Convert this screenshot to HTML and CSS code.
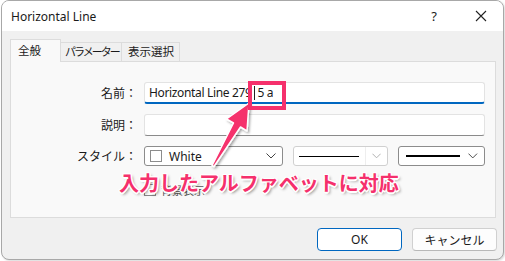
FILE: index.html
```html
<!DOCTYPE html>
<html lang="ja">
<head>
    <meta charset="UTF-8">
    <title>Horizontal Line</title>
    <link rel="stylesheet" href="styles.css">
</head>
<body>

    <div class="window">
        <div class="titlebar">
            <span class="title">Horizontal Line</span>
            <span class="help">?</span>
            <svg class="close" width="12" height="12" viewBox="0 0 12 12">
                <path d="M1 1 L11 11 M11 1 L1 11" stroke="#222" stroke-width="1.1" fill="none"/>
            </svg>
        </div>

        <div class="tabs">
            <div class="tab active">全般</div>
            <div class="tab kana">パラメーター</div>
            <div class="tab">表示選択</div>
        </div>

        <div class="panel">
            <div class="form">
                <label>名前：</label>
                <div class="input focused">Horizontal Line 279<span class="caret"></span>5 a</div>

                <label>説明：</label>
                <div class="input"></div>

                <label>スタイル：</label>
                <div class="combos">
                    <div class="combo color">
                        <span class="swatch"></span>
                        <span class="combo-text">White</span>
                        <svg class="chev" width="10" height="6" viewBox="0 0 10 6"><path d="M0.5 0.5 L5 5 L9.5 0.5" stroke="#444" fill="none"/></svg>
                    </div>
                    <div class="combo line disabled">
                        <span class="stroke thin"></span>
                        <span class="sep"></span>
                        <svg class="chev" width="10" height="6" viewBox="0 0 10 6"><path d="M0.5 0.5 L5 5 L9.5 0.5" stroke="#aaa" fill="none"/></svg>
                    </div>
                    <div class="combo line">
                        <span class="stroke thick"></span>
                        <svg class="chev" width="10" height="6" viewBox="0 0 10 6"><path d="M0.5 0.5 L5 5 L9.5 0.5" stroke="#444" fill="none"/></svg>
                    </div>
                </div>

                <span></span>
                <div class="check"><span class="box"></span>背景表示</div>
            </div>
        </div>

        <div class="buttons">
            <button class="btn default">OK</button>
            <button class="btn">キャンセル</button>
        </div>

        <!-- annotation -->
        <svg class="marks" width="505" height="261" viewBox="0 0 505 261">
            <defs>
                <filter id="shadow" x="-20%" y="-20%" width="140%" height="140%">
                    <feDropShadow dx="1.5" dy="1.5" stdDeviation="1.2" flood-color="#000" flood-opacity="0.35"/>
                </filter>
            </defs>
            <polygon points="249,103 247,131 240.5,127 214,166.5 212,165.5 233.5,123 226.5,119"
                     fill="#f5306c" stroke="#fff" stroke-width="1.5" stroke-linejoin="round" filter="url(#shadow)"/>
            <rect x="250" y="83" width="34" height="25" fill="none" stroke="#f5306c" stroke-width="4"/>
        </svg>
        <div class="note">入力したアルファベットに対応</div>
    </div>

</body>
</html>
```

FILE: styles.css
```css
* {
    box-sizing: border-box;
    margin: 0;
    padding: 0;
}

body {
    font-family: 'Noto Sans', 'Noto Sans CJK JP', sans-serif;
    background-color: #fff;
    color: #1a1a1a;
    font-size: 12px;
    width: 505px;
    height: 261px;
    overflow: hidden;
}

.window {
    position: relative;
    width: 503px;
    height: 260px;
    margin-left: 1px;
    background-color: #f0f0f0;
    border: 1px solid #a8a8a8;
    border-radius: 8px;
    box-shadow: 1px 1px 2px rgba(0, 0, 0, 0.15);
    overflow: hidden;
}

.titlebar {
    height: 30px;
    background-color: #fff;
    display: flex;
    align-items: center;
    padding-left: 9px;
}

.title {
    font-size: 12px;
    flex: 1;
}

.help {
    font-size: 13px;
    margin-right: 38px;
}

.close {
    margin-right: 16px;
}

.tabs {
    display: flex;
    align-items: flex-end;
    margin-top: 7px;
    padding-left: 8px;
    height: 23px;
}

.tab {
    height: 19px;
    padding: 0 5px;
    line-height: 18px;
    font-size: 11.5px;
    white-space: nowrap;
    overflow: hidden;
    border: 1px solid #dcdcdc;
    border-bottom: none;
    background-color: #f0f0f0;
    margin-left: -1px;
}

.tab.active {
    height: 23px;
    width: 51px;
    padding-left: 7px;
    line-height: 21px;
    background-color: #f9f9f9;
    position: relative;
    z-index: 1;
    margin-left: 0;
    margin-bottom: -1px;
}

.tab.kana {
    width: 62px;
    padding: 0 1px 0 4px;
    font-size: 11px;
    letter-spacing: -2px;
}

.tab:nth-child(3) {
    width: 59px;
    padding-left: 6px;
}

.panel {
    margin-left: 8px;
    width: 486px;
    height: 157px;
    background-color: #f9f9f9;
    border: 1px solid #dcdcdc;
    padding-top: 20px;
}

.form {
    display: grid;
    grid-template-columns: 126px 341px;
    column-gap: 7px;
    row-gap: 10px;
    align-items: center;
}

.form label {
    text-align: right;
    font-size: 12px;
}

.input {
    height: 22px;
    background-color: #fff;
    border: 1px solid #e3e3e3;
    border-bottom-color: #8a8a8a;
    border-radius: 3px;
    padding-left: 4px;
    font-size: 12px;
    letter-spacing: -0.35px;
    line-height: 20px;
}

.input.focused {
    border-bottom: 2px solid #0067c0;
}

.caret {
    display: inline-block;
    width: 1px;
    height: 14px;
    background-color: #222;
    vertical-align: -3px;
    margin: 0 2px 0 3px;
}

.combos {
    display: flex;
    gap: 10px;
}

.combo {
    height: 20px;
    background-color: #fff;
    border: 1px solid #8c8c8c;
    border-radius: 3px;
    display: flex;
    align-items: center;
    padding: 0 6px 0 5px;
}

.combo.color {
    width: 139px;
}

.combo.disabled {
    width: 95px;
    border-color: #d0d0d0;
}

.combo.line:not(.disabled) {
    width: 87px;
}

.swatch {
    width: 12px;
    height: 12px;
    border: 1px solid #8c8c8c;
    background-color: #fff;
    margin-right: 7px;
}

.combo-text {
    flex: 1;
    font-size: 12px;
}

.stroke {
    display: block;
    background-color: #000;
    margin-right: 6px;
}

.stroke.thin {
    width: 66px;
    height: 1px;
}

.stroke.thick {
    width: 57px;
    height: 2px;
    margin-left: 2px;
    margin-right: 8px;
}

.sep {
    width: 1px;
    height: 18px;
    background-color: #eee;
    margin-right: 6px;
}

.check {
    display: flex;
    align-items: center;
    gap: 5px;
    font-size: 11px;
    color: #555;
    margin-top: 6px;
}

.box {
    width: 12px;
    height: 12px;
    border: 1px solid #888;
    background-color: #fff;
}

.buttons {
    display: flex;
    justify-content: flex-end;
    gap: 10px;
    padding-top: 10px;
    padding-right: 6px;
}

.btn {
    font-family: 'Noto Sans', 'Noto Sans CJK JP', sans-serif;
    font-size: 12px;
    color: #1a1a1a;
    height: 23px;
    width: 85px;
    background-color: #fdfdfd;
    border: 1px solid #d0d0d0;
    border-bottom-color: #b8b8b8;
    border-radius: 4px;
}

.btn.default {
    background-color: #fff;
    border: 1px solid #0067c0;
}

.marks {
    position: absolute;
    left: -2px;
    top: -1px;
    pointer-events: none;
}

.note {
    position: absolute;
    left: 117px;
    top: 170px;
    font-family: 'Noto Sans CJK JP', sans-serif;
    font-weight: 700;
    font-size: 20px;
    line-height: 24px;
    color: #f5306c;
    text-shadow:
        -1px -1px 0 #fff, 1px -1px 0 #fff, -1px 1px 0 #fff, 1px 1px 0 #fff,
        0 -1.5px 0 #fff, 0 1.5px 0 #fff, -1.5px 0 0 #fff, 1.5px 0 0 #fff,
        2px 2px 3px rgba(0, 0, 0, 0.45);
}
```
